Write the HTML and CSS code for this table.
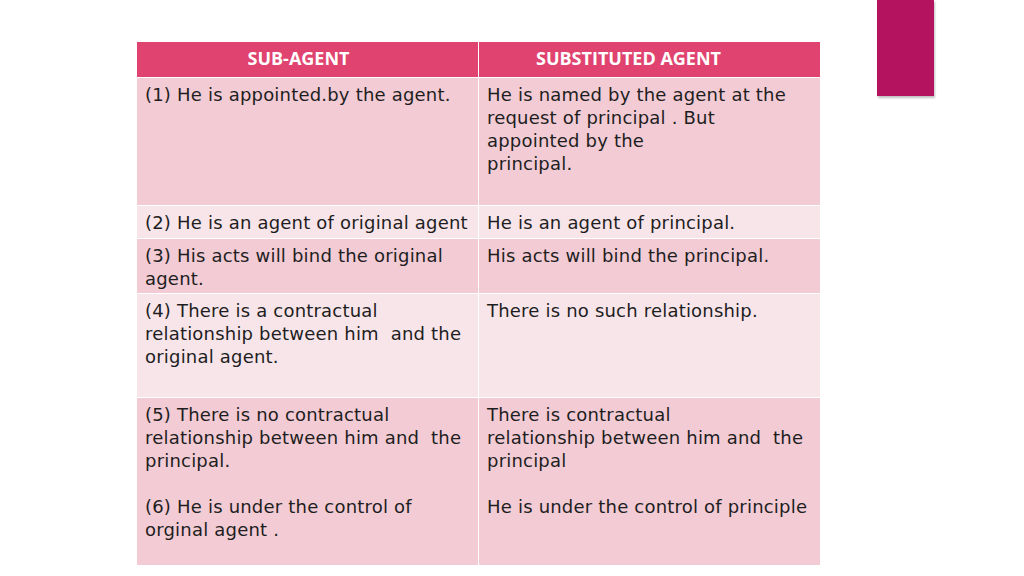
FILE: index.html
```html
<!DOCTYPE html>
<html>
<head>
<meta charset="utf-8">
<link rel="stylesheet" href="styles.css">
</head>
<body>
<div class="slide">
  <div class="accent"></div>
  <div class="table">
    <div class="head h1">SUB-AGENT</div>
    <div class="head h2">SUBSTITUTED AGENT</div>

    <div class="cell dark">(1) He is appointed.by the agent.</div>
    <div class="cell dark">He is named by the agent at the<br>request of principal . But<br>appointed by the<br>principal.</div>

    <div class="cell light">(2) He is an agent of original agent</div>
    <div class="cell light">He is an agent of principal.</div>

    <div class="cell dark">(3) His acts will bind the original<br>agent.</div>
    <div class="cell dark">His acts will bind the principal.</div>

    <div class="cell light">(4) There is a contractual<br>relationship between him&nbsp; and the<br>original agent.</div>
    <div class="cell light">There is no such relationship.</div>

    <div class="cell dark"><p>(5) There is no contractual<br>relationship between him and&nbsp; the<br>principal.</p><p>(6) He is under the control of<br>orginal agent .</p></div>
    <div class="cell dark"><p>There is contractual<br>relationship between him and&nbsp; the<br>principal</p><p>He is under the control of principle</p></div>
  </div>
</div>
</body>
</html>
```
FILE: styles.css
```css
html, body {
  margin: 0;
  padding: 0;
  background: #ffffff;
}
.slide {
  position: relative;
  width: 1024px;
  height: 576px;
  padding: 42px 0 0 137px;
  box-sizing: border-box;
  font-family: "DejaVu Sans", sans-serif;
}
.accent {
  position: absolute;
  left: 877px;
  top: 0;
  width: 57px;
  height: 96px;
  background: #b4135f;
  box-shadow: 1px 2px 2px rgba(0,0,0,0.25);
}
.table {
  display: grid;
  grid-template-columns: 341px 341px;
  grid-template-rows: 35px 127px 32px 54px 103px 167px;
  gap: 1px;
  background: #ffffff;
  width: 683px;
}
.head {
  background: #e0436f;
  color: #ffffff;
  font-family: "Open Sans", sans-serif;
  font-weight: 700;
  font-size: 18px;
  display: flex;
  align-items: center;
  justify-content: center;
  padding-bottom: 4px;
  box-sizing: border-box;
}
.h1 { padding-right: 18px; }
.h2 { padding-right: 42px; }
.cell {
  padding: 5px 6px 0 8px;
  font-size: 18px;
  line-height: 23px;
  color: #1e1e1e;
  letter-spacing: 0.2px;
  white-space: nowrap;
}
.cell p { margin: 0 0 23px 0; }
.dark { background: #f2cbd4; }
.light { background: #f8e5ea; }
```
